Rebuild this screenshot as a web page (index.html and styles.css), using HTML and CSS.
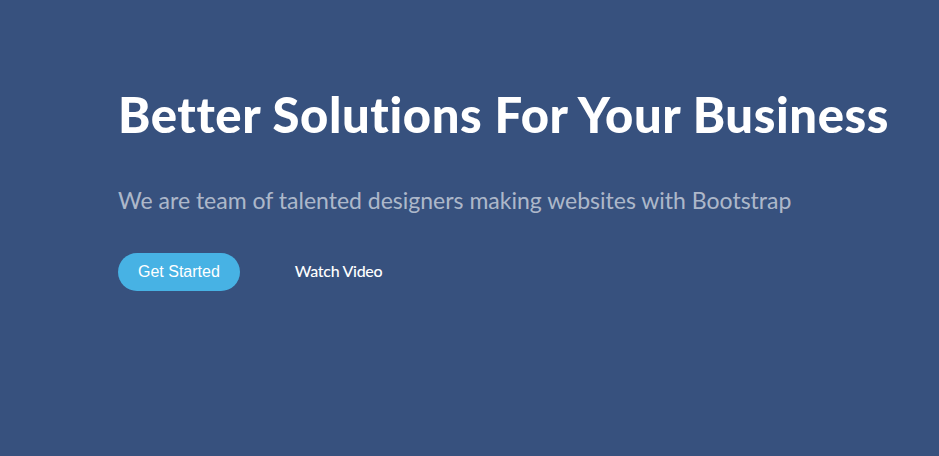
FILE: index.html
```html
<!DOCTYPE html>
<html>
<head>
<meta charset="utf-8">
<link rel="stylesheet" href="styles.css">
</head>
<body>
<section class="hero">
  <div class="hero-content">
    <h1 class="hero-title">Better Solutions For Your Business</h1>
    <h2 class="hero-sub">We are team of talented designers making websites with Bootstrap</h2>
    <div class="hero-actions">
      <a class="btn-start" href="#">Get Started</a>
      <a class="btn-video" href="#">Watch Video</a>
    </div>
  </div>
</section>
</body>
</html>
```
FILE: styles.css
```css
html, body {
  margin: 0;
  padding: 0;
}
body {
  background: #37517e;
  font-family: "Lato", "Open Sans", sans-serif;
  width: 939px;
  height: 456px;
  overflow: hidden;
}
.hero {
  padding: 86px 0 0 118px;
}
.hero-title {
  margin: 0;
  font-size: 49px;
  line-height: 56px;
  font-weight: 900;
  letter-spacing: 0.6px;
  color: #ffffff;
  white-space: nowrap;
}
.hero-sub {
  margin: 42px 0 0 0;
  font-size: 23px;
  line-height: 32px;
  font-weight: 400;
  color: rgba(255, 255, 255, 0.6);
  white-space: nowrap;
}
.hero-actions {
  display: flex;
  align-items: baseline;
  margin-top: 37px;
}
.btn-start {
  font-family: "Liberation Sans", Arial, sans-serif;
  font-size: 16px;
  color: #ffffff;
  text-decoration: none;
  background: #47b2e4;
  border-radius: 50px;
  padding: 10px 20px 11px;
  line-height: 17px;
}
.btn-video {
  margin-left: 55px;
  font-size: 16px;
  letter-spacing: -0.3px;
  font-weight: 500;
  color: #ffffff;
  text-decoration: none;
}
```
